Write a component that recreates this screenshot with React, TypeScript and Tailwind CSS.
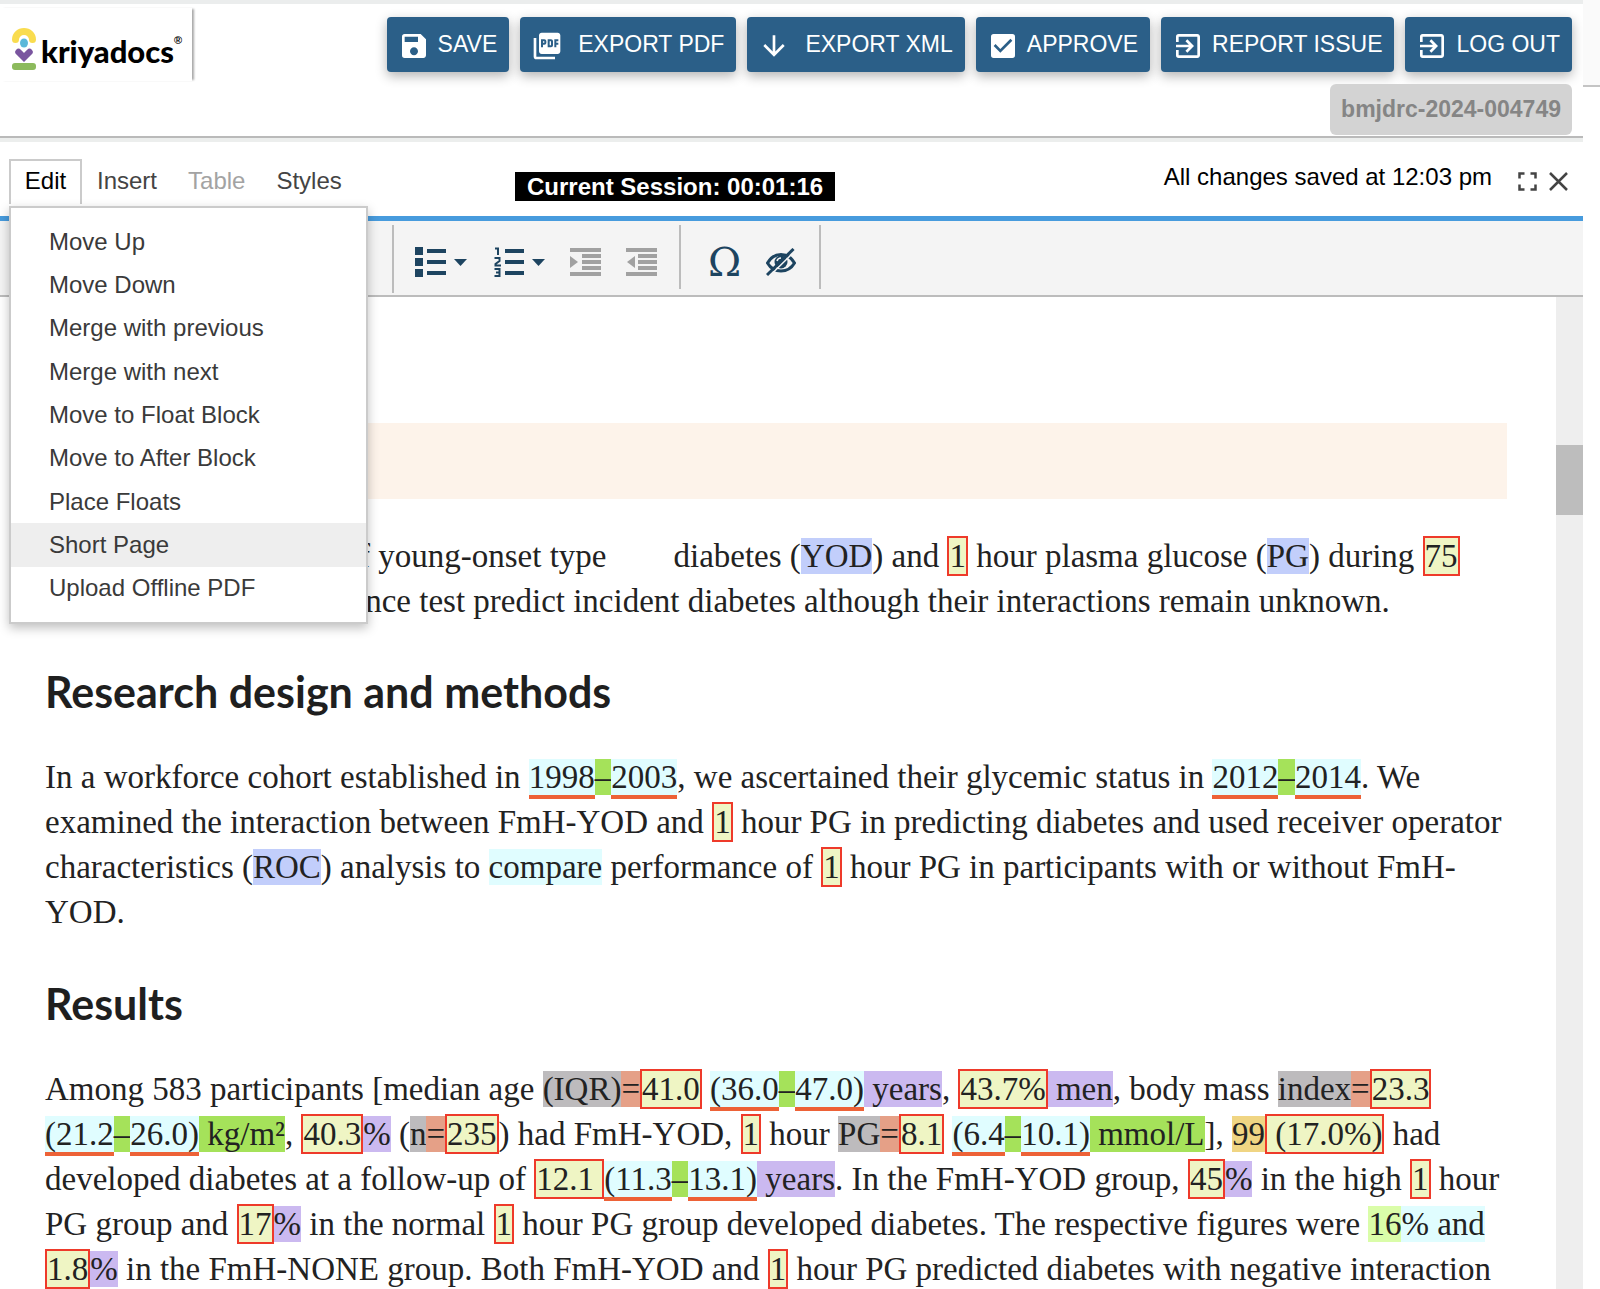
import type { ReactNode } from "react";
import { MdArrowDownward, MdCheckBox, MdExitToApp, MdPictureAsPdf, MdSave } from "react-icons/md";

const actions = [
  { label: "SAVE", icon: MdSave, wide: false },
  { label: "EXPORT PDF", icon: MdPictureAsPdf, wide: true },
  { label: "EXPORT XML", icon: MdArrowDownward, wide: true },
  { label: "APPROVE", icon: MdCheckBox, wide: false },
  { label: "REPORT ISSUE", icon: MdExitToApp, wide: false },
  { label: "LOG OUT", icon: MdExitToApp, wide: false },
];

const editMenu = [
  "Move Up",
  "Move Down",
  "Merge with previous",
  "Merge with next",
  "Move to Float Block",
  "Move to After Block",
  "Place Floats",
  "Short Page",
  "Upload Offline PDF",
];

const tones = {
  abbr: "bg-[#c2cefb]",
  cyan: "bg-[#e0fdff]",
  range: "bg-[#e0fdff] border-b-4 border-[#ed6237]",
  dash: "bg-[#a5e25a]",
  unit: "bg-[#cbb9f0]",
  term: "bg-[#bdbbbd]",
  equals: "bg-[#e5a087]",
  gold: "bg-[#f0d583]",
  lime: "bg-[#dafda9]",
  num: "bg-[#eff5c4] border-2 border-[#ee3a2a]",
};

function M({ t, children }: { t: keyof typeof tones; children: ReactNode }) {
  return <mark className={`text-inherit ${tones[t]}`}>{children}</mark>;
}

function Logo() {
  return (
    <a href="#" className="flex items-center text-black">
      <svg width="26" height="44" viewBox="0 0 26 44" aria-hidden="true">
        <path d="M4.500 12.500a8.500 8 0 0 1 17 0" fill="none" stroke="#f9dc4f" strokeWidth="7" strokeLinecap="round" />
        <ellipse cx="13" cy="16" rx="4" ry="4.500" fill="#5cb8d9" />
        <path d="M7.500 25l5.500 5.500 5.500-5.500" fill="none" stroke="#7a559f" strokeWidth="6.500" strokeLinecap="round" />
        <rect x="1" y="36" width="24" height="7" rx="3" fill="#8cba5c" />
      </svg>
      <span className="ml-1 pt-1 font-[Lato,sans-serif] text-[31px] leading-[44px] font-black">kriyadocs</span>
      <span className="mb-4 text-[11px] leading-none font-bold">®</span>
    </a>
  );
}

function Caret() {
  return (
    <svg width="13" height="7" viewBox="0 0 13 7" aria-hidden="true">
      <path d="M0 0h13L6.500 7z" fill="#1d4460" />
    </svg>
  );
}

function BulletList() {
  return (
    <svg width="31" height="30" viewBox="0 0 31 30" fill="#1d4460" aria-hidden="true">
      <path d="M0 0h8v8H0zM0 11h8v8H0zM0 22h8v8H0zM12 2h19v4H12zM12 13h19v4H12zM12 24h19v4H12z" />
    </svg>
  );
}

function NumberList() {
  return (
    <svg width="30" height="30" viewBox="0 0 30 30" aria-hidden="true">
      <path d="M11 2h19v4H11zM11 13h19v4H11zM11 24h19v4H11z" fill="#1d4460" />
      <path d="M1 1.500h3V8M.5 11h5v3l-4 3v1.500H7M.5 22h5v7h-5M2 25.500h3.500" fill="none" stroke="#1d4460" strokeWidth="2" />
    </svg>
  );
}

function Indent({ out }: { out?: boolean }) {
  return (
    <svg width="31" height="28" viewBox="0 0 31 28" fill="#a1a1a1" aria-hidden="true">
      <path d="M0 0h31v4H0zM12 6h19v4H12zM12 12h19v4H12zM12 18h19v4H12zM0 24h31v4H0z" />
      <path d={out ? "M9 8v12L1 14z" : "M0 8v12l8-6z"} />
    </svg>
  );
}

function HiddenEye() {
  return (
    <svg width="30" height="29" viewBox="0 0 30 29" fill="none" stroke="#1d4460" aria-hidden="true">
      <path d="M1.500 15C5 9 10 6.500 15 6.500S25 9 28.500 15c-3.500 6-8.500 8-13.500 8S5 21 1.500 15z" strokeWidth="3" />
      <circle cx="15" cy="14" r="6.500" fill="#1d4460" stroke="none" />
      <path d="M11 13c.5-2 2-3 4-3" stroke="#f4f4f4" strokeWidth="1.500" />
      <path d="M3 28.500L29.500 2.500" stroke="#f4f4f4" strokeWidth="1.500" />
      <path d="M1 27L27.500 1" strokeWidth="3" />
    </svg>
  );
}

function Heading({ children }: { children: ReactNode }) {
  return <h2 className="font-[Lato,sans-serif] text-[43px] leading-[52px] font-bold text-[#1f1f1f]">{children}</h2>;
}

function EditMenu() {
  return (
    <ul className="absolute top-[45px] left-[-2px] z-10 grid h-[418px] w-[359px] auto-rows-fr border-2 border-[#cbcbcb] bg-white py-3 shadow-[0_4px_10px_rgba(0,0,0,0.25)]">
      {editMenu.map((item) => (
        <li key={item} className={`flex ${item === "Short Page" ? "bg-[#eeeeee]" : ""}`}>
          <button className="w-full pl-[38px] text-left text-2xl text-[#3a3a3a]">{item}</button>
        </li>
      ))}
    </ul>
  );
}

export default function App() {
  return (
    <div className="flex h-screen overflow-hidden bg-white font-['Liberation_Sans',Arial,sans-serif]">
      <div className="flex min-w-0 flex-1 flex-col">
        <header className="flex h-[138px] items-start justify-between border-t-4 border-b-2 border-t-[#ebeded] border-b-[#bababa]">
          <div className="mt-1 flex h-[73px] w-[192px] items-center pt-2 pl-[11px] shadow-[3px_0_2px_-1px_#aaaaaa]">
            <Logo />
          </div>
          <div className="flex flex-col items-end gap-3 pt-[13px] pr-[11px]">
            <div className="flex gap-[11px]">
              {actions.map(({ label, icon: Icon, wide }) => (
                <button
                  key={label}
                  className={`flex h-[55px] items-center rounded bg-[#2b5f88] pr-3 pl-[11px] text-[23px] whitespace-nowrap text-white shadow-[0_4px_12px_rgba(0,0,0,0.3)] ${wide ? "gap-[15px]" : "gap-2"}`}
                >
                  <Icon size={32} className="mt-0.5" />
                  <span>{label}</span>
                </button>
              ))}
            </div>
            <span className="rounded-md bg-[#d3d3d3] px-[11px] text-[23px] leading-[51px] font-bold text-[#858585]">
              bmjdrc-2024-004749
            </span>
          </div>
        </header>

        <nav className="flex h-[78px] border-t-4 border-t-[#eceeed] pl-[9px]">
          <div className="flex w-[506px] pt-[17px] text-2xl text-[#444444]">
            <div className="relative h-[45px] w-[73px] border-2 border-b-0 border-[#cbcbcb]">
              <button className="h-full w-full pb-1 text-black">Edit</button>
              <EditMenu />
            </div>
            <button className="ml-[15px] h-[45px] pb-0.5">Insert</button>
            <button className="ml-[31px] h-[45px] pb-0.5 text-[#a3a3a3]" disabled>Table</button>
            <button className="ml-[31px] h-[45px] pb-0.5">Styles</button>
          </div>
          <span className="mt-[30px] h-[29px] bg-black px-3 text-2xl leading-[29px] font-bold text-white">
            Current Session: 00:01:16
          </span>
          <div className="flex flex-1 justify-end pt-[17px] pr-[15px]">
            <span className="text-2xl leading-[36px] text-black">All changes saved at 12:03 pm</span>
            <button className="ml-[26px] h-[45px]" aria-label="Full screen">
              <svg width="19" height="19" viewBox="0 0 19 19" fill="none" stroke="#444" strokeWidth="2.500">
                <path d="M1.500 6.500V1.500H6.500M12.500 1.500h5V6.500M17.500 12.500v5H12.500M6.500 17.500H1.500V12.500" />
              </svg>
            </button>
            <button className="ml-3 h-[45px]" aria-label="Close">
              <svg width="19" height="19" viewBox="0 0 19 19" fill="none" stroke="#444" strokeWidth="2.500">
                <path d="M1 1l17 17M18 1L1 18" />
              </svg>
            </button>
          </div>
        </nav>

        <div className="flex h-[81px] items-start border-t-[5px] border-b-2 border-t-[#479bdd] border-b-[#bcbcbc] bg-[#f4f4f4] pt-1 pl-[392px]">
          <div className="flex h-[68px] items-center border-l-2 border-[#bcbcbc] pt-1.5 pl-[21px]">
            <button className="flex items-center gap-2" aria-label="Bulleted list"><BulletList /><Caret /></button>
            <button className="ml-[27px] flex items-center gap-2" aria-label="Numbered list"><NumberList /><Caret /></button>
            <button className="ml-[25px]" aria-label="Increase indent" disabled><Indent /></button>
            <button className="ml-[25px]" aria-label="Decrease indent" disabled><Indent out /></button>
          </div>
          <div className="ml-[22px] flex h-[64px] w-[142px] items-center gap-[25px] border-x-2 border-[#bcbcbc] pt-2.5 pl-[27px]">
            <button className="font-['DejaVu_Serif',serif] text-[40px] leading-[40px] text-[#1d4460]" aria-label="Special character">Ω</button>
            <button aria-label="Hide markup"><HiddenEye /></button>
          </div>
        </div>

        <div className="flex min-h-0 flex-1">
          <main className="min-w-0 flex-1 overflow-hidden pt-[126px] pr-[49px] pl-[45px] font-['Liberation_Serif',serif] text-[33px] leading-[45px] whitespace-nowrap text-[#222222]">
            <div className="h-[76px] bg-[#fdf3ea]" />
            <p className="mt-[35px]">
              <span className="inline-block w-[325px] text-right">f</span> young-onset type
              <span className="inline-block w-[67px]" />
              diabetes (<M t="abbr">YOD</M>) and <M t="num">1</M> hour plasma glucose (<M t="abbr">PG</M>) during <M t="num">75</M>
              <br />
              <span className="inline-block w-[366px] text-right">nce</span> test predict incident diabetes although their interactions remain unknown.
            </p>

            <div className="mt-[42px]"><Heading>Research design and methods</Heading></div>
            <p className="mt-[37px]">
              In a workforce cohort established in <M t="range">1998</M><M t="dash">–</M><M t="range">2003</M>, we ascertained their glycemic status in <M t="range">2012</M><M t="dash">–</M><M t="range">2014</M>. We
              <br />
              examined the interaction between FmH-YOD and <M t="num">1</M> hour PG in predicting diabetes and used receiver operator
              <br />
              characteristics (<M t="abbr">ROC</M>) analysis to <M t="cyan">compare</M> performance of <M t="num">1</M> hour PG in participants with or without FmH-
              <br />
              YOD.
            </p>

            <div className="mt-[43px]"><Heading>Results</Heading></div>
            <p className="mt-[37px]">
              Among 583 participants [median age <M t="term">(IQR)</M><M t="equals">=</M><M t="num">41.0</M> <M t="range">(36.0</M><M t="dash">–</M><M t="range">47.0)</M><M t="unit"> years</M>, <M t="num">43.7%</M><M t="unit"> men</M>, body mass <M t="term">index</M><M t="equals">=</M><M t="num">23.3</M>
              <br />
              <M t="range">(21.2</M><M t="dash">–</M><M t="range">26.0)</M><M t="dash"> kg/m²</M>, <M t="num">40.3</M><M t="unit">%</M> (<M t="term">n</M><M t="equals">=</M><M t="num">235</M>) had FmH-YOD, <M t="num">1</M> hour <M t="term">PG</M><M t="equals">=</M><M t="num">8.1</M> <M t="range">(6.4</M><M t="dash">–</M><M t="range">10.1)</M><M t="dash"> mmol/L</M>], <M t="gold">99</M><M t="num"> (17.0%)</M> had
              <br />
              developed diabetes at a follow-up of <M t="num">12.1 </M><M t="range">(11.3</M><M t="dash">–</M><M t="range">13.1)</M><M t="unit"> years</M>. In the FmH-YOD group, <M t="num">45</M><M t="unit">%</M> in the high <M t="num">1</M> hour
              <br />
              PG group and <M t="num">17</M><M t="unit">%</M> in the normal <M t="num">1</M> hour PG group developed diabetes. The respective figures were <M t="lime">16</M><M t="cyan">% and</M>
              <br />
              <M t="num">1.8</M><M t="unit">%</M> in the FmH-NONE group. Both FmH-YOD and <M t="num">1</M> hour PG predicted diabetes with negative interaction
            </p>
          </main>
          <div className="w-[27px] bg-[#eeeeee] pt-[148px]">
            <div className="h-[70px] bg-[#bdbdbd]" />
          </div>
        </div>
      </div>

      <aside className="w-[17px]">
        <div className="h-[87px] border-b-2 border-[#c4c4c4] bg-[#fafafa]" />
      </aside>
    </div>
  );
}
